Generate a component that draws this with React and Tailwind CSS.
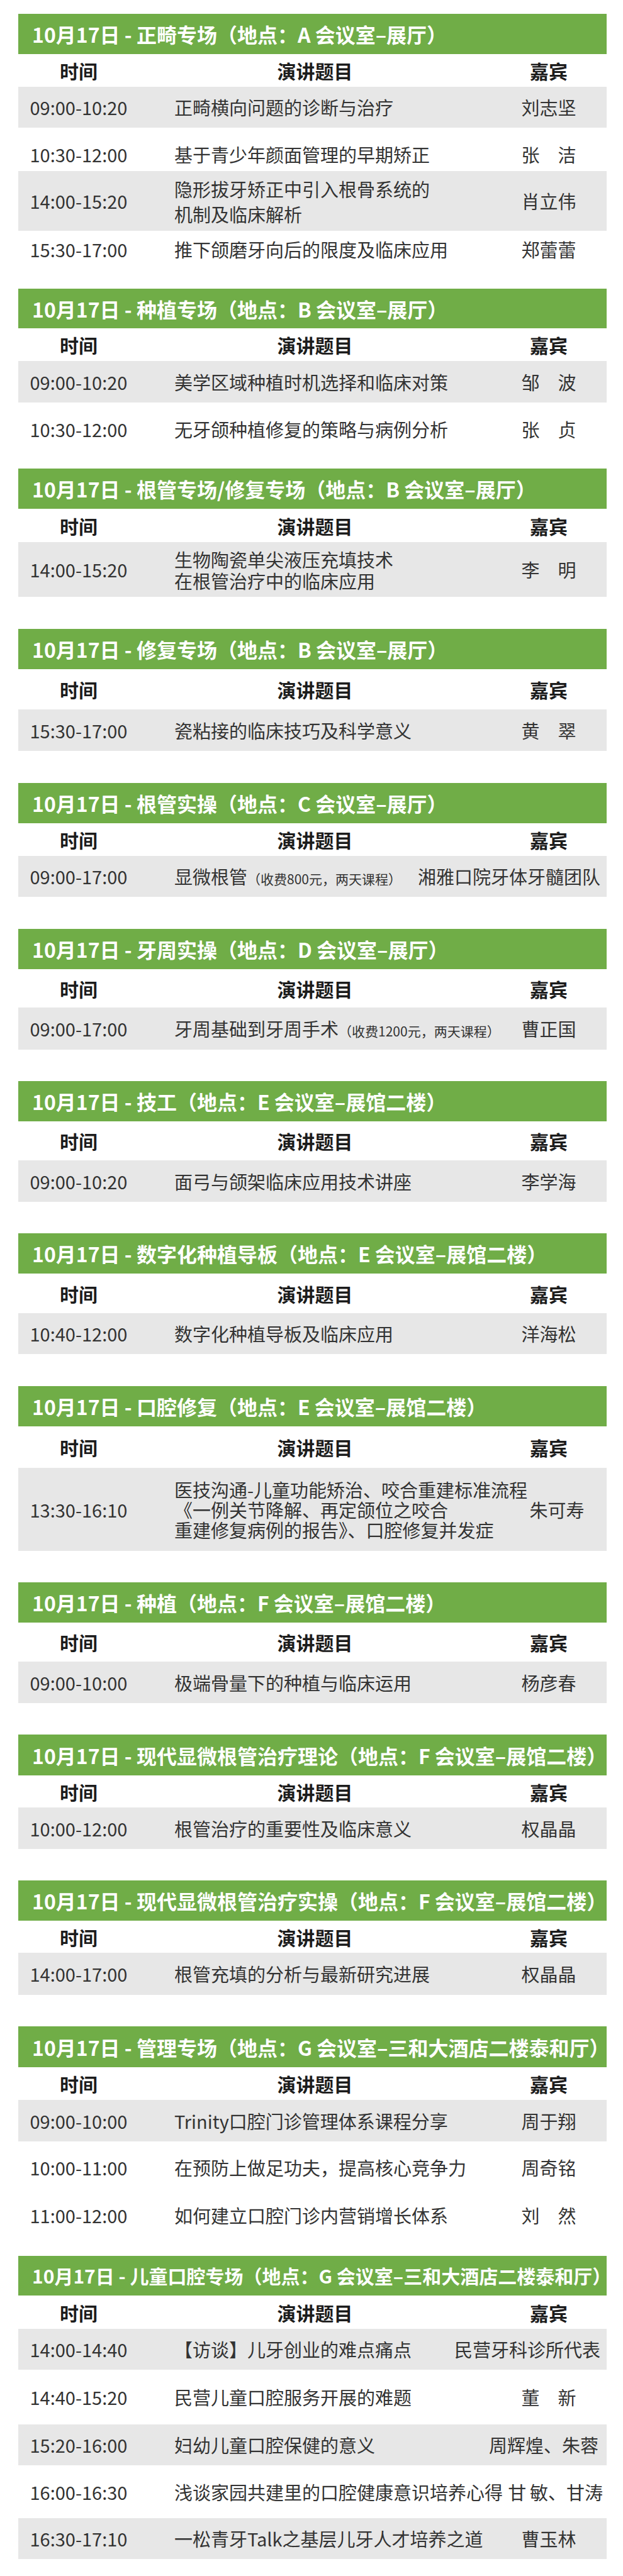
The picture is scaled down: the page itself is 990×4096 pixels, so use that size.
import React from "react";
import clsx from "clsx";

const sections = [
  {
    title: "10月17日 - 正畸专场（地点：A 会议室–展厅）",
    green: "h-[64px]",
    head: "h-[52px]",
    mb: "mb-[33px]",
    rows: [
      { time: "09:00-10:20", topic: ["正畸横向问题的诊断与治疗"], who: "刘志坚", gray: true, h: "h-[65px]" },
      { time: "10:30-12:00", topic: ["基于青少年颜面管理的早期矫正"], who: "张　洁", h: "h-[69px]", pad: "pt-[16px]" },
      { time: "14:00-15:20", topic: ["隐形拔牙矫正中引入根骨系统的", "机制及临床解析"], who: "肖立伟", gray: true, h: "h-[95px]", lead: "leading-[40px]" },
      { time: "15:30-17:00", topic: ["推下颌磨牙向后的限度及临床应用"], who: "郑蕾蕾", h: "h-[59px]" },
    ],
  },
  {
    title: "10月17日 - 种植专场（地点：B 会议室–展厅）",
    green: "h-[63px]",
    head: "h-[52px]",
    mb: "mb-[20px]",
    rows: [
      { time: "09:00-10:20", topic: ["美学区域种植时机选择和临床对策"], who: "邹　波", gray: true, h: "h-[66px]" },
      { time: "10:30-12:00", topic: ["无牙颌种植修复的策略与病例分析"], who: "张　贞", h: "h-[85px]" },
    ],
  },
  {
    title: "10月17日 - 根管专场/修复专场（地点：B 会议室–展厅）",
    green: "h-[64px]",
    head: "h-[53px]",
    mb: "mb-[51px]",
    rows: [
      { time: "14:00-15:20", topic: ["生物陶瓷单尖液压充填技术", "在根管治疗中的临床应用"], who: "李　明", gray: true, h: "h-[87px]", lead: "leading-[34px]" },
    ],
  },
  {
    title: "10月17日 - 修复专场（地点：B 会议室–展厅）",
    green: "h-[64px]",
    head: "h-[64px]",
    mb: "mb-[51px]",
    rows: [
      { time: "15:30-17:00", topic: ["瓷粘接的临床技巧及科学意义"], who: "黄　翠", gray: true, h: "h-[66px]" },
    ],
  },
  {
    title: "10月17日 - 根管实操（地点：C 会议室–展厅）",
    green: "h-[64px]",
    head: "h-[52px]",
    mb: "mb-[51px]",
    rows: [
      { time: "09:00-17:00", topic: ["显微根管"], note: "（收费800元，两天课程）", who: "湘雅口院牙体牙髓团队", end: "pr-[10px]", gray: true, h: "h-[65px]" },
    ],
  },
  {
    title: "10月17日 - 牙周实操（地点：D 会议室–展厅）",
    green: "h-[64px]",
    head: "h-[61px]",
    mb: "mb-[50px]",
    rows: [
      { time: "09:00-17:00", topic: ["牙周基础到牙周手术"], note: "（收费1200元，两天课程）", who: "曹正国", gray: true, h: "h-[67px]" },
    ],
  },
  {
    title: "10月17日 - 技工（地点：E 会议室–展馆二楼）",
    green: "h-[64px]",
    head: "h-[62px]",
    mb: "mb-[50px]",
    rows: [
      { time: "09:00-10:20", topic: ["面弓与颌架临床应用技术讲座"], who: "李学海", gray: true, h: "h-[66px]" },
    ],
  },
  {
    title: "10月17日 - 数字化种植导板（地点：E 会议室–展馆二楼）",
    green: "h-[64px]",
    head: "h-[63px]",
    mb: "mb-[51px]",
    rows: [
      { time: "10:40-12:00", topic: ["数字化种植导板及临床应用"], who: "洋海松", gray: true, h: "h-[65px]" },
    ],
  },
  {
    title: "10月17日 - 口腔修复（地点：E 会议室–展馆二楼）",
    green: "h-[64px]",
    head: "h-[66px]",
    mb: "mb-[50px]",
    rows: [
      {
        time: "13:30-16:10",
        topic: ["医技沟通-儿童功能矫治、咬合重建标准流程", "《一例关节降解、再定颌位之咬合", "重建修复病例的报告》、口腔修复并发症"],
        who: "朱可寿",
        shift: true,
        gray: true,
        h: "h-[132px]",
        lead: "leading-[32px]",
      },
    ],
  },
  {
    title: "10月17日 - 种植（地点：F 会议室–展馆二楼）",
    green: "h-[64px]",
    head: "h-[62px]",
    mb: "mb-[50px]",
    rows: [
      { time: "09:00-10:00", topic: ["极端骨量下的种植与临床运用"], who: "杨彦春", gray: true, h: "h-[66px]" },
    ],
  },
  {
    title: "10月17日 - 现代显微根管治疗理论（地点：F 会议室–展馆二楼）",
    green: "h-[65px]",
    head: "h-[51px]",
    mb: "mb-[50px]",
    rows: [
      { time: "10:00-12:00", topic: ["根管治疗的重要性及临床意义"], who: "权晶晶", gray: true, h: "h-[66px]" },
    ],
  },
  {
    title: "10月17日 - 现代显微根管治疗实操（地点：F 会议室–展馆二楼）",
    green: "h-[64px]",
    head: "h-[51px]",
    mb: "mb-[50px]",
    rows: [
      { time: "14:00-17:00", topic: ["根管充填的分析与最新研究进展"], who: "权晶晶", gray: true, h: "h-[67px]" },
    ],
  },
  {
    title: "10月17日 - 管理专场（地点：G 会议室–三和大酒店二楼泰和厅）",
    green: "h-[65px]",
    head: "h-[52px]",
    mb: "mb-[30px]",
    rows: [
      { time: "09:00-10:00", topic: ["Trinity口腔门诊管理体系课程分享"], who: "周于翔", gray: true, h: "h-[66px]" },
      { time: "10:00-11:00", topic: ["在预防上做足功夫，提高核心竞争力"], who: "周奇铭", h: "h-[82px]" },
      { time: "11:00-12:00", topic: ["如何建立口腔门诊内营销增长体系"], who: "刘　然", h: "h-[70px]" },
    ],
  },
  {
    title: "10月17日 - 儿童口腔专场（地点：G 会议室–三和大酒店二楼泰和厅）",
    size: "text-[30px]",
    green: "h-[63px]",
    head: "h-[53px]",
    mb: "mb-[23px]",
    rows: [
      { time: "14:00-14:40", topic: ["【访谈】儿牙创业的难点痛点"], who: "民营牙科诊所代表", end: "pr-[10px]", gray: true, h: "h-[65px]" },
      { time: "14:40-15:20", topic: ["民营儿童口腔服务开展的难题"], who: "董　新", h: "h-[87px]" },
      { time: "15:20-16:00", topic: ["妇幼儿童口腔保健的意义"], who: "周辉煌、朱蓉", end: "pr-[13px]", gray: true, h: "h-[65px]" },
      { time: "16:00-16:30", topic: ["浅谈家园共建里的口腔健康意识培养心得"], who: "甘\u2009敏、甘涛", end: "pr-[6px]", h: "h-[84px]" },
      { time: "16:30-17:10", topic: ["一松青牙Talk之基层儿牙人才培养之道"], who: "曹玉林", gray: true, h: "h-[65px]" },
    ],
  },
];

function Row({ r }) {
  return (
    <div className={clsx("flex items-center text-[29px] text-[#333333]", r.h, r.pad, r.gray && "bg-[#e7e7e7]")}>
      <div className="w-[192px] shrink-0 text-center leading-none">{r.time}</div>
      <div className={clsx("w-[559px] shrink-0 pl-[56px] whitespace-nowrap", r.lead || "leading-none")}>
        {r.topic.map((line, i) => (
          <div key={i}>
            {line}
            {r.note && <span className="text-[21px]">{r.note}</span>}
          </div>
        ))}
      </div>
      <div
        className={clsx(
          "w-[184px] shrink-0 flex whitespace-nowrap leading-none",
          r.end ? ["justify-end", r.end] : r.shift ? "justify-center pl-[26px]" : "justify-center"
        )}
      >
        {r.who}
      </div>
    </div>
  );
}

function Section({ s }) {
  return (
    <section className={s.mb}>
      <div
        className={clsx(
          "flex items-center bg-[#70ad47] pl-[22px] font-bold text-white whitespace-nowrap",
          s.size || "text-[32px]",
          s.green
        )}
      >
        {s.title}
      </div>
      <div className={clsx("flex items-center text-[30px] font-bold text-[#1c1c1c] leading-none", s.head)}>
        <div className="w-[192px] text-center">时间</div>
        <div className="w-[559px] text-center">演讲题目</div>
        <div className="w-[184px] text-center">嘉宾</div>
      </div>
      {s.rows.map((r, i) => (
        <Row key={i} r={r} />
      ))}
    </section>
  );
}

export default function App() {
  return (
    <main className="w-[990px] bg-white pt-[22px] font-['Noto_Sans_CJK_SC','Noto_Sans',sans-serif]">
      <div className="ml-[29px] w-[935px]">
        {sections.map((s, i) => (
          <Section key={i} s={s} />
        ))}
      </div>
    </main>
  );
}
